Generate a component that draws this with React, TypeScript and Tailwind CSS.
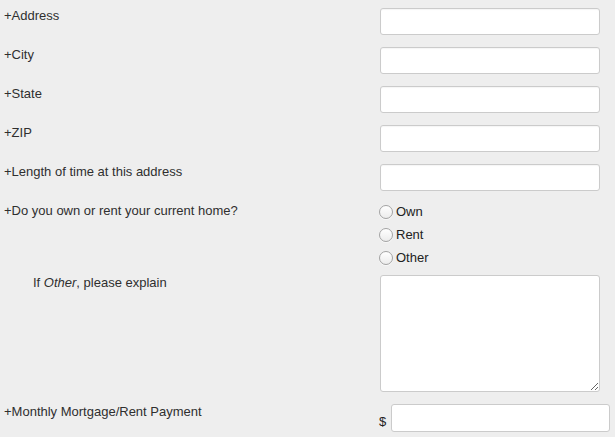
import React from "react";

const font = { fontFamily: '"Liberation Sans", Arial, sans-serif' };

function TextInput() {
  return (
    <input
      type="text"
      className="block w-[220px] h-[27px] bg-white border border-[#cbcbcb] rounded-[3px] shadow-[inset_0_1px_1px_rgba(0,0,0,0.04)] outline-none"
    />
  );
}

function Row({ label, children, indent = false }: { label: React.ReactNode; children: React.ReactNode; indent?: boolean }) {
  return (
    <div className="flex mb-[12px]">
      <div className={`w-[376px] shrink-0 text-[13px] leading-[16px] text-[#2f2f2f] ${indent ? "pl-[33px]" : "pl-[4px]"}`}>
        {label}
      </div>
      <div className="pl-[4px]">{children}</div>
    </div>
  );
}

function Radio({ label }: { label: string }) {
  return (
    <div className="flex items-center h-[23px]">
      <span className="w-[14px] h-[14px] rounded-full border border-[#a3a3a3] bg-gradient-to-b from-white to-[#ececec] shadow-[0_1px_0_rgba(255,255,255,0.6)]" />
      <span className="ml-[3px] text-[13px] leading-[18px] text-[#222]">{label}</span>
    </div>
  );
}

export default function App() {
  return (
    <div className="w-[615px] h-[437px] bg-[#eeeeee] overflow-hidden pt-[8px]" style={font}>
      <Row label="+Address"><TextInput /></Row>
      <Row label="+City"><TextInput /></Row>
      <Row label="+State"><TextInput /></Row>
      <Row label="+ZIP"><TextInput /></Row>
      <Row label="+Length of time at this address"><TextInput /></Row>
      <div className="flex mb-[6px] -mt-[4px]">
        <div className="w-[376px] shrink-0 text-[13px] leading-[16px] text-[#2f2f2f] pl-[4px] pt-[4px]">
          +Do you own or rent your current home?
        </div>
        <div className="pl-[3px] pt-[1px]">
          <Radio label="Own" />
          <Radio label="Rent" />
          <Radio label="Other" />
        </div>
      </div>
      <Row indent label={<>If <em>Other</em>, please explain</>}>
        <textarea className="block w-[220px] h-[117px] bg-white border border-[#cbcbcb] rounded-[3px] outline-none" />
      </Row>
      <div className="flex">
        <div className="w-[376px] shrink-0 text-[13px] leading-[16px] text-[#2f2f2f] pl-[4px]">
          +Monthly Mortgage/Rent Payment
        </div>
        <div className="pl-[3px] flex items-end">
          <span className="text-[13px] leading-[18px] text-[#222] mr-[5px] mb-[1px]">$</span>
          <input
            type="text"
            className="block w-[219px] h-[28px] bg-white border border-[#cbcbcb] rounded-[3px] outline-none"
          />
        </div>
      </div>
    </div>
  );
}
